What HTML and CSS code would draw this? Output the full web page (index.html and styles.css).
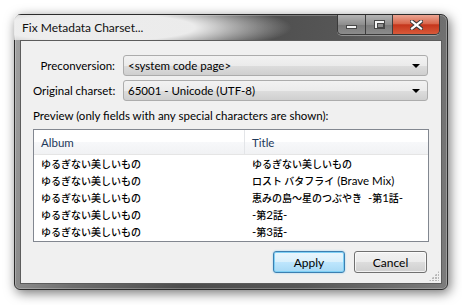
FILE: index.html
```html
<!DOCTYPE html>
<html lang="en">
<head>
  <meta charset="UTF-8" />
  <title>Fix Metadata Charset...</title>
  <link rel="stylesheet" href="styles.css">
</head>
<body>

  <div class="window">
    <div class="titlebar">
      <span class="caption">Fix Metadata Charset...</span>
      <div class="caption-buttons">
        <div class="cbtn min"><span class="icon-min"></span></div>
        <div class="cbtn max"><span class="icon-max"></span></div>
        <div class="cbtn close">
          <svg width="13" height="10" viewBox="0 0 13 10">
            <path d="M2 1.5 L11 8.5 M11 1.5 L2 8.5" stroke="#3a3a3a" stroke-width="4.2" stroke-linecap="square"/>
            <path d="M2 1.5 L11 8.5 M11 1.5 L2 8.5" stroke="#ffffff" stroke-width="2.2" stroke-linecap="square"/>
          </svg>
        </div>
      </div>
    </div>

    <div class="client">
      <div class="form">
        <label>Preconversion:</label>
        <div class="combo"><span>&lt;system code page&gt;</span><i class="arrow"></i></div>
        <label>Original charset:</label>
        <div class="combo"><span>65001 - Unicode (UTF-8)</span><i class="arrow"></i></div>
      </div>

      <div class="preview-label">Preview (only fields with any special characters are shown):</div>

      <div class="list">
        <div class="list-header">
          <div class="col album">Album</div>
          <div class="col title">Title</div>
        </div>
        <div class="row">
          <div class="col album"><span class="jp">ゆるぎない美しいもの</span></div>
          <div class="col title"><span class="jp">ゆるぎない美しいもの</span></div>
        </div>
        <div class="row">
          <div class="col album"><span class="jp">ゆるぎない美しいもの</span></div>
          <div class="col title"><span class="jp">ロスト バタフライ</span> (Brave Mix)</div>
        </div>
        <div class="row">
          <div class="col album"><span class="jp">ゆるぎない美しいもの</span></div>
          <div class="col title"><span class="jp">恵みの島〜星のつぶやき</span>&nbsp; -<span class="jp">第</span>1<span class="jp">話</span>-</div>
        </div>
        <div class="row">
          <div class="col album"><span class="jp">ゆるぎない美しいもの</span></div>
          <div class="col title">-<span class="jp">第</span>2<span class="jp">話</span>-</div>
        </div>
        <div class="row">
          <div class="col album"><span class="jp">ゆるぎない美しいもの</span></div>
          <div class="col title">-<span class="jp">第</span>3<span class="jp">話</span>-</div>
        </div>
      </div>

      <div class="actions">
        <button class="btn default">Apply</button>
        <button class="btn">Cancel</button>
      </div>

      <div class="grip"></div>
    </div>
  </div>

</body>
</html>
```

FILE: styles.css
```css
* {
  margin: 0;
  padding: 0;
  box-sizing: border-box;
}

body {
  width: 462px;
  height: 305px;
  background: #ffffff;
  font-family: 'Lato', 'Noto Sans CJK JP', sans-serif;
  font-size: 11.5px;
  color: #000000;
  overflow: hidden;
}

.window {
  margin: 14px 0 0 14px;
  width: 434px;
  height: 276px;
  border: 1px solid #2c2c2c;
  border-radius: 7px 7px 6px 6px;
  background: linear-gradient(100deg, #a4a4a4 0%, #6e6e6e 22%, #4c4c4c 45%, #575757 70%, #7c7c7c 100%);
  box-shadow: 2px 3px 12px rgba(0, 0, 0, 0.55), inset 0 0 0 1px rgba(255, 255, 255, 0.25);
  display: flex;
  flex-direction: column;
}

/* title bar */

.titlebar {
  height: 25px;
  display: flex;
  align-items: center;
  padding-left: 7px;
}

.caption {
  flex: 1;
  font-size: 12px;
  color: #111111;
  padding: 5px 0 5px 8px;
  margin-left: -8px;
  background: radial-gradient(ellipse 60% 110% at 26% 50%, rgba(240, 240, 240, 0.97) 50%, rgba(240, 240, 240, 0) 100%);
}

.caption-buttons {
  align-self: flex-start;
  display: flex;
  margin-right: 7px;
  border: 1px solid #3a3a3a;
  border-top: none;
  border-radius: 0 0 5px 5px;
  overflow: hidden;
  box-shadow: 0 1px 0 rgba(255, 255, 255, 0.35);
}

.cbtn {
  height: 19px;
  display: flex;
  align-items: center;
  justify-content: center;
  border-right: 1px solid #3e3e3e;
}

.cbtn.min {
  width: 28px;
  background: linear-gradient(#b4b4b4, #8e8e8e 50%, #7a7a7a 51%, #8c8c8c);
}

.cbtn.max {
  width: 27px;
  background: linear-gradient(#b4b4b4, #8e8e8e 50%, #7a7a7a 51%, #8c8c8c);
}

.cbtn.close {
  width: 46px;
  border-right: none;
  background: linear-gradient(#eba593, #d9684d 45%, #c5361c 52%, #d95a3a);
}

.icon-min {
  width: 11px;
  height: 4px;
  margin-top: 4px;
  background: #f4f4f4;
  border: 1px solid #474747;
}

.icon-max {
  width: 11px;
  height: 9px;
  border: 1px solid #474747;
  background: #f4f4f4;
  position: relative;
}

.icon-max::after {
  content: "";
  position: absolute;
  left: 2px;
  top: 2px;
  width: 5px;
  height: 3px;
  border: 1px solid #474747;
  background: #8e8e8e;
}

/* client area */

.client {
  flex: 1;
  margin: 0 5px 5px 5px;
  border: 1px solid #5c5c5c;
  background: #f0f0f0;
  padding: 14px 12px 0 12px;
  position: relative;
}

.form {
  display: grid;
  grid-template-columns: 82px 1fr;
  column-gap: 8px;
  row-gap: 4px;
  align-items: center;
  margin-right: 1px;
}

.form label {
  text-align: right;
  white-space: nowrap;
}

.combo {
  height: 21px;
  border: 1px solid #acacac;
  border-radius: 3px;
  background: linear-gradient(#f2f2f2, #ebebeb 50%, #dddddd 51%, #cfcfcf);
  display: flex;
  align-items: center;
  padding-left: 4px;
  padding-right: 7px;
}

.combo span {
  flex: 1;
}

.arrow {
  width: 0;
  height: 0;
  border-left: 4px solid transparent;
  border-right: 4px solid transparent;
  border-top: 4px solid #000000;
}

.preview-label {
  margin-top: 7px;
  line-height: 15px;
}

.list {
  margin-top: 6px;
  height: 113px;
  border: 1px solid #828790;
  background: #ffffff;
}

.list-header {
  height: 25px;
  display: flex;
  align-items: center;
  color: #1e395b;
  background: linear-gradient(#ffffff, #ffffff 50%, #f7f8fa 51%, #f1f2f4);
  border-bottom: 1px solid #e5e5e5;
}

.list-header .col.album {
  border-right: 1px solid #e3e5e8;
  height: 100%;
  display: flex;
  align-items: center;
}

.row {
  height: 17px;
  display: flex;
  align-items: center;
}

.col {
  padding-left: 7px;
  white-space: nowrap;
}

.col.album {
  width: 211px;
}

.jp {
  font-family: 'Noto Sans CJK JP', sans-serif;
  font-size: 10px;
  font-weight: 500;
}

.actions {
  display: flex;
  justify-content: flex-end;
  gap: 9px;
  margin-top: 9px;
  padding-right: 2px;
}

.btn {
  width: 73px;
  height: 22px;
  font-family: inherit;
  font-size: 12px;
  color: #000000;
  border: 1px solid #707070;
  border-radius: 3px;
  background: linear-gradient(#f2f2f2, #ebebeb 50%, #dddddd 51%, #cfcfcf);
  box-shadow: inset 0 0 0 1px rgba(255, 255, 255, 0.7);
}

.btn.default {
  width: 72px;
  border-color: #3c7fb1;
  background: linear-gradient(#eaf6fd, #d9f0fc 50%, #bee6fd 51%, #a7d9f5);
  box-shadow: inset 0 0 0 1px #7fd0f5, 0 0 2px #8ccef0;
}

.grip {
  position: absolute;
  right: 2px;
  bottom: 2px;
  width: 10px;
  height: 10px;
  background:
    radial-gradient(circle at 1px 1px, #b9b9b9 1px, transparent 1.2px) 0 0 / 3px 3px;
  clip-path: polygon(100% 0, 100% 100%, 0 100%);
}
```
